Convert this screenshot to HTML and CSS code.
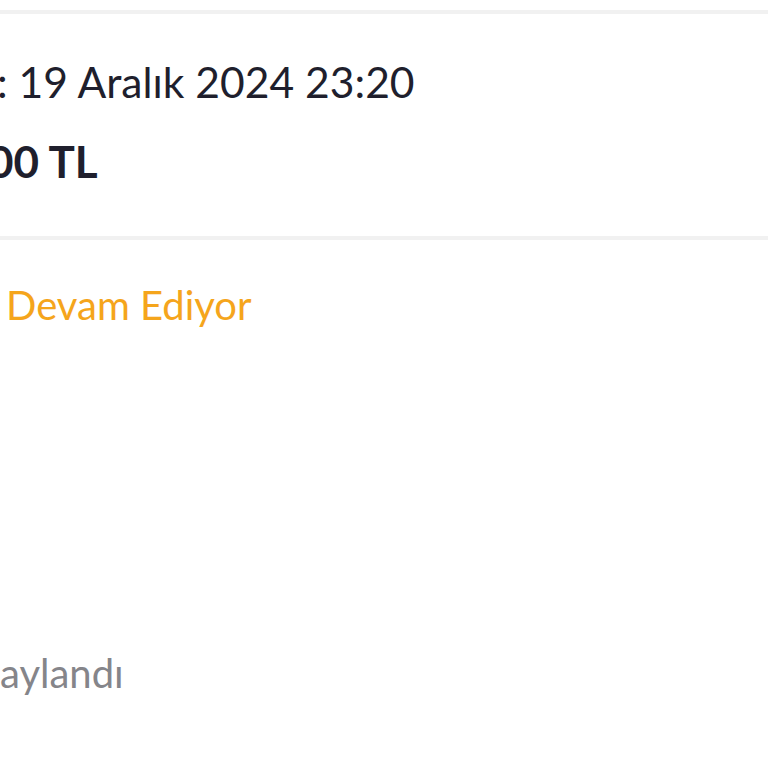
FILE: index.html
```
<!DOCTYPE html>
<html lang="tr">
<head>
<meta charset="utf-8">
<link rel="stylesheet" href="styles.css">
</head>
<body>
<div class="page">
  <div class="top-space"></div>
  <section class="card card-summary">
    <p class="line line-date"><span class="cut-date">: 19 Aralık 2024 23:20</span></p>
    <p class="line line-total"><span class="cut-total">00 TL</span></p>
  </section>
  <section class="card card-status">
    <p class="line line-status"><span class="cut-status">Devam Ediyor</span></p>
    <p class="line line-approved"><span class="cut-approved">aylandı</span></p>
  </section>
  <div class="bottom-space"></div>
</div>
</body>
</html>
```
FILE: styles.css
```
html, body {
  margin: 0;
  padding: 0;
  background: #ffffff;
}
body {
  width: 768px;
  height: 768px;
  overflow: hidden;
  font-family: Lato, "Noto Sans", sans-serif;
  color: #1f1f2d;
}
.page {
  display: flex;
  flex-direction: column;
}
.top-space {
  height: 10px;
  background: #ffffff;
}
.card {
  border-top: 4px solid #f1f1f1;
  background: #ffffff;
  box-sizing: border-box;
}
.card-summary {
  height: 226px;
  padding-top: 42px;
}
.card-status {
  height: 497px;
  padding-top: 41px;
  border-bottom: 4px solid #f1f1f1;
  box-sizing: content-box;
}
.line {
  margin: 0;
  line-height: 1.2;
  white-space: nowrap;
}
.line-date {
  font-size: 42.6px;
}
.cut-date {
  margin-left: -3px;
}
.line-total {
  font-size: 44px;
  font-weight: 700;
  margin-top: 28px;
}
.cut-total {
  margin-left: -12px;
}
.line-status {
  font-size: 40px;
  color: #f5a51c;
  padding-left: 6px;
}
.line-approved {
  font-size: 40px;
  color: #85858a;
  margin-top: 320px;
}
.cut-approved {
  margin-left: 0;
}
.bottom-space {
  flex: 1;
}
```
